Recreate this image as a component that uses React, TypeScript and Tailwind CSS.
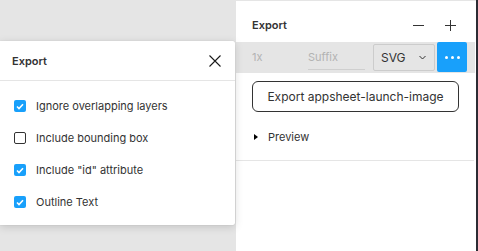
import React from "react";

function Check({ checked }: { checked: boolean }) {
  if (checked) {
    return (
      <div className="w-[12px] h-[12px] rounded-[2px] bg-[#18a0fb] flex items-center justify-center">
        <svg width="8" height="7" viewBox="0 0 8 7" fill="none">
          <path d="M1 3.5L3 5.5L7 1.2" stroke="white" strokeWidth="1.6" />
        </svg>
      </div>
    );
  }
  return <div className="w-[12px] h-[12px] rounded-[2px] border border-[#333333] bg-white" />;
}

const items: { label: string; checked: boolean }[] = [
  { label: "Ignore overlapping layers", checked: true },
  { label: "Include bounding box", checked: false },
  { label: 'Include "id" attribute', checked: true },
  { label: "Outline Text", checked: true },
];

export default function App() {
  return (
    <div
      className="w-[478px] h-[251px] flex overflow-hidden text-[11px] text-[#333333]"
      style={{ fontFamily: "Inter, 'Noto Sans', sans-serif" }}
    >
      {/* canvas */}
      <div className="relative w-[236px] h-full bg-[#e5e5e5] z-10">
        <div className="absolute left-0 top-[41px] w-[235px] h-[184px] bg-white rounded-r-[2px] shadow-[0_2px_8px_rgba(0,0,0,0.15),0_0_1px_rgba(0,0,0,0.2)] flex flex-col">
          <div className="h-[40px] flex items-center justify-between pl-[12px] pr-[14px] border-b border-[#e5e5e5]">
            <span className="font-semibold text-[11px] text-[#333333] pt-[1px]">Export</span>
            <svg width="12" height="12" viewBox="0 0 12 12" fill="none">
              <path d="M0.5 0.5L11.5 11.5M11.5 0.5L0.5 11.5" stroke="#1a1a1a" strokeWidth="1.1" />
            </svg>
          </div>
          <div className="pt-[9px] flex flex-col">
            {items.map((it) => (
              <div key={it.label} className="h-[32px] flex items-center pl-[14px] gap-[10px]">
                <Check checked={it.checked} />
                <span className="text-[11px] text-[#333333]">{it.label}</span>
              </div>
            ))}
          </div>
        </div>
      </div>

      {/* right panel */}
      <div className="flex-1 h-full bg-white border-t border-[#e5e5e5] flex flex-col">
        <div className="h-[41px] pt-[16px] pl-[16px] flex items-start justify-between pr-[20px]">
          <span className="font-semibold leading-[16px] text-[#333333]">Export</span>
          <div className="flex items-center gap-[21px] h-[16px]">
            <svg width="11" height="11" viewBox="0 0 11 11" fill="none">
              <path d="M0 5.5H11" stroke="#333333" strokeWidth="1" />
            </svg>
            <svg width="11" height="11" viewBox="0 0 11 11" fill="none">
              <path d="M0 5.5H11M5.5 0V11" stroke="#333333" strokeWidth="1" />
            </svg>
          </div>
        </div>
        <div className="h-[31px] bg-[#e5e5e5] flex items-center pl-[16px] mr-[1px]">
          <span className="w-[56px] text-[#b3b3b3]">1x</span>
          <div className="w-[57px] h-[31px] flex items-center relative">
            <span className="text-[#b3b3b3]">Suffix</span>
            <div className="absolute left-0 right-0 bottom-[3px] h-[1px] bg-[#cfcfcf]" />
          </div>
          <div className="ml-[8px] w-[62px] h-[27px] border border-[#cccccc] rounded-[2px] flex items-center justify-between pl-[7px] pr-[8px]">
            <span className="text-[12px] text-[#333333]">SVG</span>
            <svg width="7" height="5" viewBox="0 0 7 5" fill="none">
              <path d="M0.5 1L3.5 4L6.5 1" stroke="#333333" strokeWidth="1" />
            </svg>
          </div>
          <div className="ml-[2px] w-[30px] h-[30px] bg-[#18a0fb] rounded-[2px] flex items-center justify-center gap-[3px] self-start">
            <div className="w-[3px] h-[3px] bg-white rounded-full" />
            <div className="w-[3px] h-[3px] bg-white rounded-full" />
            <div className="w-[3px] h-[3px] bg-white rounded-full" />
          </div>
        </div>
        <div className="pt-[8px] pl-[16px] pr-[15px]">
          <div className="h-[31px] w-[207px] border border-[#333333] rounded-[6px] flex items-center justify-center text-[12px] text-[#333333]">
            Export appsheet-launch-image
          </div>
        </div>
        <div className="h-[49px] flex items-center pl-[18px] pt-[2px] border-b border-[#e5e5e5] mr-[2px]">
          <svg width="4" height="6" viewBox="0 0 4 6" className="mr-[10px]">
            <path d="M0 0L4 3L0 6Z" fill="#000000" />
          </svg>
          <span className="text-[#333333]">Preview</span>
        </div>
      </div>
      <div className="w-[2px] h-full bg-[#2c2c34]" />
    </div>
  );
}
